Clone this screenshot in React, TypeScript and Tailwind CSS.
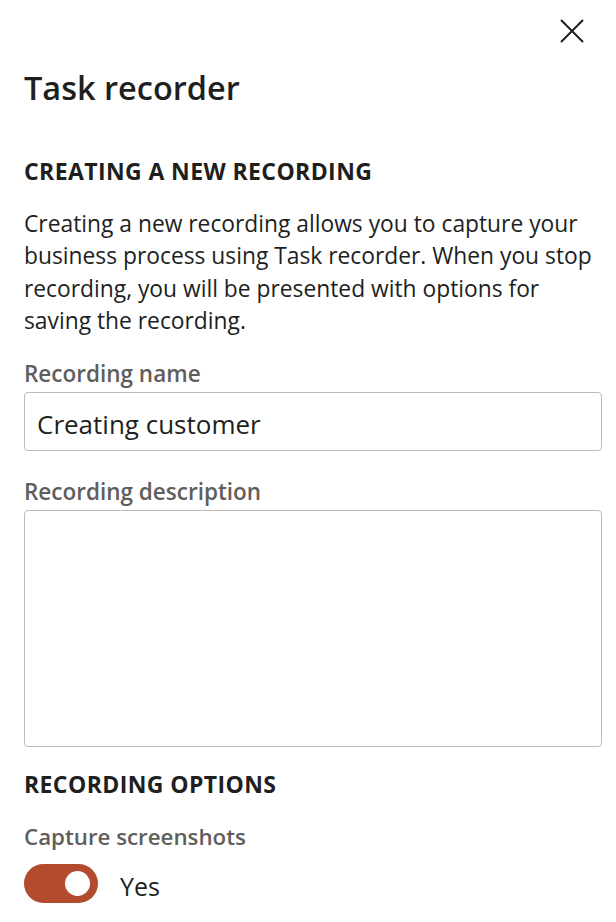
import React from "react";

const font = { fontFamily: '"Open Sans", "Noto Sans", sans-serif' };

export default function App() {
  return (
    <div
      className="w-[616px] h-[922px] bg-white pl-6 pr-[14px] text-[#201f1e] overflow-hidden"
      style={font}
    >
      {/* Close */}
      <div className="flex justify-end pt-[19px] pr-[18px]">
        <button className="w-6 h-6 text-[#201f1e]">
          <svg viewBox="0 0 24 24" width="24" height="24" fill="none" stroke="currentColor" strokeWidth="2">
            <path d="M1 1L23 23M23 1L1 23" />
          </svg>
        </button>
      </div>

      <h1 className="mt-[25px] text-[32.5px] leading-[40px] font-semibold">Task recorder</h1>

      <h2 className="mt-[49px] text-[23px] leading-[28px] font-bold tracking-[0.4px]">CREATING A NEW RECORDING</h2>

      <p className="mt-[23px] text-[22.8px] leading-[32.3px]">
        Creating a new recording allows you to capture your business process using Task recorder. When you stop
        recording, you will be presented with options for saving the recording.
      </p>

      <label className="block mt-[23px] text-[22.5px] leading-[28px] font-semibold text-[#605e5c]">
        Recording name
      </label>
      <div className="mt-1 h-[59px] rounded-[4px] border-[1.5px] border-[#bebab6] flex items-center px-3 pt-[5px]">
        <span className="text-[26px]">Creating customer</span>
      </div>

      <label className="block mt-[27px] text-[22.5px] leading-[28px] font-semibold text-[#605e5c]">
        Recording description
      </label>
      <div className="mt-1 h-[237px] rounded-[4px] border-[1.5px] border-[#bebab6]" />

      <h2 className="mt-[23px] text-[23px] leading-[28px] font-bold tracking-[0.4px]">RECORDING OPTIONS</h2>

      <div className="mt-[25px] text-[22.3px] leading-[28px] font-semibold text-[#605e5c]">
        Capture screenshots
      </div>
      <div className="mt-[13px] flex items-center">
        <div className="w-[74px] h-[39px] rounded-full bg-[#b34b2f] flex items-center justify-end pr-[8px]">
          <div className="w-[25px] h-[25px] rounded-full bg-white" />
        </div>
        <span className="ml-[22px] pt-[5px] text-[25px] leading-[32px]">Yes</span>
      </div>
    </div>
  );
}
